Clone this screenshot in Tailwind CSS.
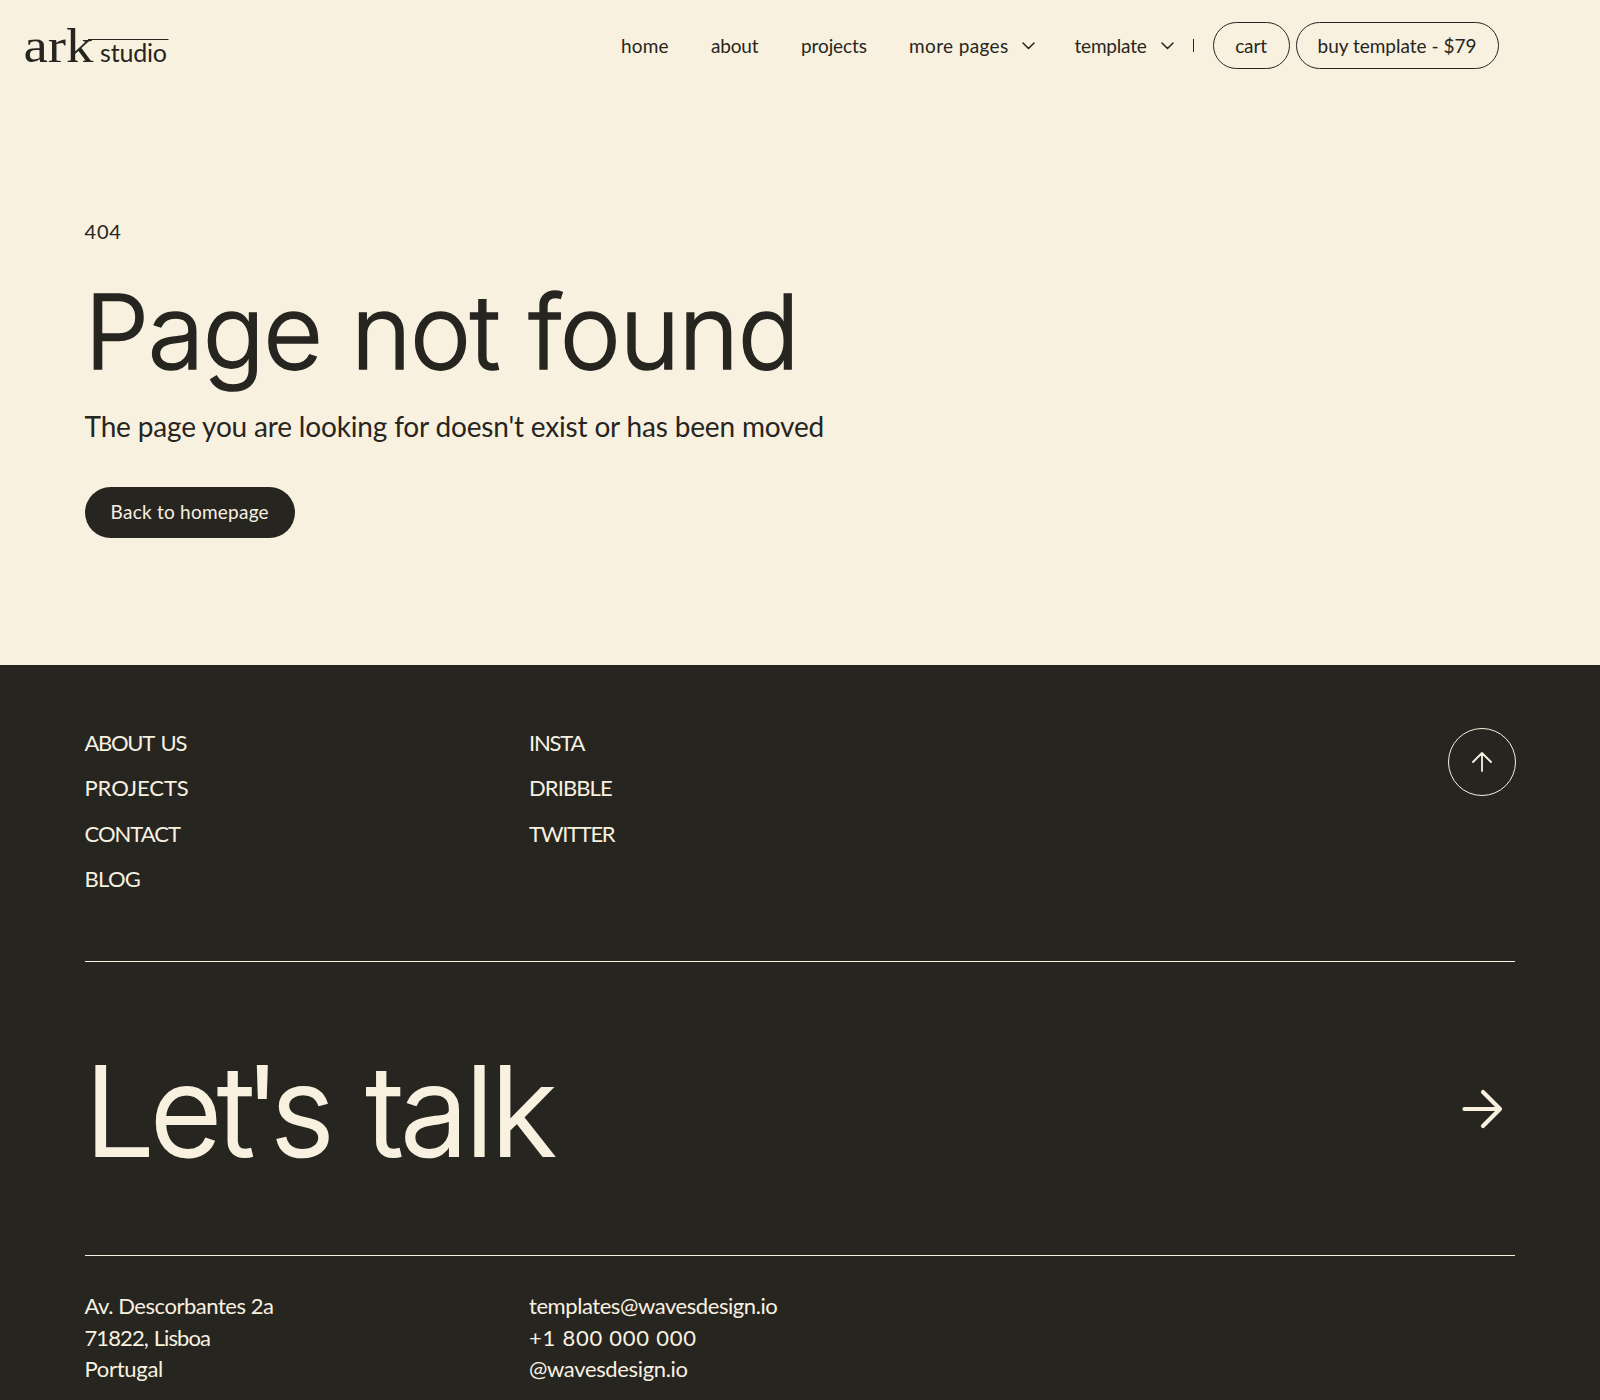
<!DOCTYPE html>
<html lang="en">
<head>
    <meta charset="UTF-8" />
    <meta name="viewport" content="width=device-width, initial-scale=1" />
    <title>ark studio - Page not found</title>
    <script src="https://cdn.jsdelivr.net/npm/@tailwindcss/browser@4"></script>
</head>
<body class="h-[1400px] overflow-hidden flex flex-col bg-[#f8f1e0] text-[#272520] font-['Lato',sans-serif]">

<!-- Header -->
<header class="flex items-center h-[90px] shrink-0 pr-[101.5px]">
    <a href="#" aria-label="ark studio">
        <svg class="block" width="180" height="90" viewBox="0 0 180 90" fill="currentColor">
            <text x="23.5" y="62" font-family="Liberation Serif, serif" font-size="49" textLength="70" lengthAdjust="spacingAndGlyphs">ark</text>
            <path d="M88 39.5H168.5" stroke="currentColor" stroke-width="1.2" />
            <text x="100" y="62" font-family="Lato, sans-serif" font-size="25" textLength="67">studio</text>
        </svg>
    </a>
    <nav class="ml-auto flex items-center text-[19px] leading-6">
        <a href="#" class="pt-px w-[90px] tracking-[0.17px]">home</a>
        <a href="#" class="pt-px w-[90px] tracking-[-0.2px]">about</a>
        <a href="#" class="pt-px w-[108px] tracking-[-0.1px]">projects</a>
        <a href="#" class="pt-px w-[165.5px] flex items-center">
            <span class="w-[112.5px] tracking-[0.37px]">more pages</span>
            <svg width="13" height="8" viewBox="0 0 13 8" fill="none" stroke="currentColor" stroke-width="1.5" stroke-linecap="round" stroke-linejoin="round"><path d="M1 1l5.5 5.5L12 1" /></svg>
        </a>
        <a href="#" class="pt-px w-[118px] flex items-center">
            <span class="w-[86px] tracking-[-0.2px]">template</span>
            <svg width="13" height="8" viewBox="0 0 13 8" fill="none" stroke="currentColor" stroke-width="1.5" stroke-linecap="round" stroke-linejoin="round"><path d="M1 1l5.5 5.5L12 1" /></svg>
        </a>
        <span class="w-px h-[13px] bg-[#272520] mr-[19px]"></span>
        <a href="#" class="pt-px w-[77px] h-[47px] mr-1.5 flex items-center justify-center rounded-full border border-[#272520] tracking-[-0.14px]">cart</a>
        <a href="#" class="pt-px w-[203px] h-[47px] flex items-center justify-center rounded-full border border-[#272520]">buy template - $79</a>
    </nav>
</header>

<!-- 404 -->
<main class="h-[575px] shrink-0 pt-[129px] pl-[84.5px]">
    <p class="text-[20px] leading-6 tracking-[0.8px]">404</p>
    <h1 class="mt-[29px] font-['Inter',sans-serif] font-light text-[103px] leading-[120px] tracking-[-1.5px] [word-spacing:2px] [-webkit-text-stroke:1.5px_#272520]">Page not found</h1>
    <p class="mt-[13.5px] text-[28px] leading-[40px] tracking-[-0.17px]">The page you are looking for doesn't exist or has been moved</p>
    <a href="#" class="mt-[41.5px] w-[210.5px] h-[51px] flex items-center justify-center rounded-full bg-[#272520] text-[#f8f1e0] text-[19px] tracking-[0.24px]">Back to homepage</a>
</main>

<!-- Footer -->
<footer class="h-[735px] shrink-0 pl-[84.5px] pr-[85px] bg-[#272520] text-[#f8f1e0] text-[22px]">
    <div class="h-[297px] pt-[63px] flex border-b border-[#f8f1e0]">
        <ul class="w-[444.5px] pt-px leading-[28px] space-y-[17.3px]">
            <li><a href="#" class="tracking-[-1.3px] [word-spacing:3px]">ABOUT US</a></li>
            <li><a href="#" class="tracking-[-0.1px]">PROJECTS</a></li>
            <li><a href="#" class="tracking-[-0.99px]">CONTACT</a></li>
            <li><a href="#" class="tracking-[-0.7px]">BLOG</a></li>
        </ul>
        <ul class="pt-px leading-[28px] space-y-[17.3px]">
            <li><a href="#" class="tracking-[-1.21px]">INSTA</a></li>
            <li><a href="#" class="tracking-[-0.9px]">DRIBBLE</a></li>
            <li><a href="#" class="tracking-[-1.3px]">TWITTER</a></li>
        </ul>
        <a href="#" aria-label="Back to top" class="ml-auto -mr-px size-[68px] flex items-center justify-center rounded-full border border-[#f8f1e0]">
            <svg width="20" height="20" viewBox="0 0 20 20" fill="none" stroke="currentColor" stroke-width="1.8" stroke-linecap="round" stroke-linejoin="round"><path d="M10 19V1M1 10l9-9 9 9" /></svg>
        </a>
    </div>

    <a href="#" class="h-[294px] flex items-center justify-between border-b border-[#f8f1e0]">
        <span class="font-['Inter',sans-serif] font-light text-[124px] leading-[150px] tracking-[-3.4px] [word-spacing:10px] [-webkit-text-stroke:2px_#f8f1e0] mt-[5px]"><span class="tracking-[-4.5px]">Le</span><span class="tracking-[-10px]">t's</span> talk</span>
        <svg class="mr-[12px]" width="41" height="40" viewBox="0 0 41 40" fill="none" stroke="currentColor" stroke-width="4.2" stroke-linecap="round" stroke-linejoin="round"><path d="M2.5 20H38M21 3L38 20L21 37" /></svg>
    </a>

    <div class="pt-[34px] flex leading-[31.7px]">
        <div class="w-[444.5px]">
            <p class="tracking-[-0.45px]">Av. Descorbantes 2a</p>
            <p class="tracking-[-0.9px] [word-spacing:1px]">71822, Lisboa</p>
            <p class="tracking-[-0.3px]">Portugal</p>
        </div>
        <div>
            <p class="tracking-[-0.43px]">templates@wavesdesign.io</p>
            <p class="tracking-[0.75px]">+1 800 000 000</p>
            <p class="tracking-[-0.35px]">@wavesdesign.io</p>
        </div>
    </div>
</footer>

</body>
</html>
